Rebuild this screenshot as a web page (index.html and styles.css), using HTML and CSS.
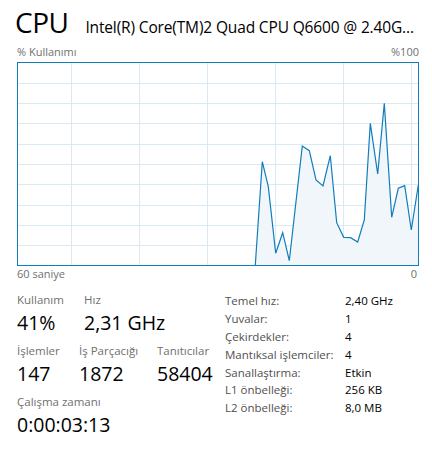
FILE: index.html
```
<!DOCTYPE html>
<html lang="tr">
<head>
<meta charset="utf-8">
<link rel="stylesheet" href="styles.css">
</head>
<body>
<div class="page">
  <header class="head">
    <h1 class="title">CPU</h1>
    <div class="model">Intel(R) Core(TM)2 Quad CPU Q6600 @ 2.40GHz</div>
  </header>
  <div class="axis axis-top"><span>% Kullanımı</span><span>%100</span></div>
  <svg class="graph" width="402" height="204" viewBox="0 0 402 204">
    <g class="grid">
      <line x1="54.5" y1="0" x2="54.5" y2="204"/>
      <line x1="122.5" y1="0" x2="122.5" y2="204"/>
      <line x1="190.5" y1="0" x2="190.5" y2="204"/>
      <line x1="258.5" y1="0" x2="258.5" y2="204"/>
      <line x1="326.5" y1="0" x2="326.5" y2="204"/>
      <line x1="394.5" y1="0" x2="394.5" y2="204"/>
      <line x1="0" y1="21.5" x2="402" y2="21.5"/>
      <line x1="0" y1="41.5" x2="402" y2="41.5"/>
      <line x1="0" y1="61.5" x2="402" y2="61.5"/>
      <line x1="0" y1="82.5" x2="402" y2="82.5"/>
      <line x1="0" y1="102.5" x2="402" y2="102.5"/>
      <line x1="0" y1="122.5" x2="402" y2="122.5"/>
      <line x1="0" y1="143.5" x2="402" y2="143.5"/>
      <line x1="0" y1="163.5" x2="402" y2="163.5"/>
      <line x1="0" y1="183.5" x2="402" y2="183.5"/>
    </g>
    <polygon class="area" points="238.3,203 245.3,99.7 251.3,124.7 258.7,191.3 265.7,170.7 272.3,198.7 285.3,84 292.3,88.7 299,118 306,124 313.3,93.7 319.7,160.7 326.7,175.3 333.7,175.7 340.7,180 347.3,158 353.3,61.3 360.7,112 367.3,41.3 374.7,155.3 381.3,126.3 387.7,123.7 394.3,168 401.3,123 401.3,203"/>
    <polyline class="line" points="238.3,203 245.3,99.7 251.3,124.7 258.7,191.3 265.7,170.7 272.3,198.7 285.3,84 292.3,88.7 299,118 306,124 313.3,93.7 319.7,160.7 326.7,175.3 333.7,175.7 340.7,180 347.3,158 353.3,61.3 360.7,112 367.3,41.3 374.7,155.3 381.3,126.3 387.7,123.7 394.3,168 401.3,123"/>
    <rect class="frame" x="0.5" y="0.5" width="401" height="203"/>
  </svg>
  <div class="axis axis-bottom"><span>60 saniye</span><span>0</span></div>

  <section class="details">
    <div class="stats">
      <div class="stat-row row-a">
        <div class="stat"><div class="label">Kullanım</div><div class="value">41%</div></div>
        <div class="stat"><div class="label">Hız</div><div class="value">2,31 GHz</div></div>
      </div>
      <div class="stat-row row-b">
        <div class="stat"><div class="label">İşlemler</div><div class="value">147</div></div>
        <div class="stat"><div class="label">İş Parçacığı</div><div class="value">1872</div></div>
        <div class="stat"><div class="label">Tanıtıcılar</div><div class="value">58404</div></div>
      </div>
      <div class="stat-row">
        <div class="stat"><div class="label">Çalışma zamanı</div><div class="value">0:00:03:13</div></div>
      </div>
    </div>
    <dl class="info">
      <dt>Temel hız:</dt><dd>2,40 GHz</dd>
      <dt>Yuvalar:</dt><dd>1</dd>
      <dt>Çekirdekler:</dt><dd>4</dd>
      <dt>Mantıksal işlemciler:</dt><dd>4</dd>
      <dt>Sanallaştırma:</dt><dd>Etkin</dd>
      <dt>L1 önbelleği:</dt><dd>256 KB</dd>
      <dt>L2 önbelleği:</dt><dd>8,0 MB</dd>
    </dl>
  </section>
</div>
</body>
</html>
```
FILE: styles.css
```
* { box-sizing: border-box; }
html, body { margin: 0; padding: 0; background: #fff; }
body {
  font-family: "Open Sans", "Noto Sans", "Liberation Sans", sans-serif;
  color: #000;
}
.page {
  width: 432px;
  padding: 6px 13px 0 17px;
}
.head {
  display: flex;
  align-items: baseline;
  gap: 17px;
  height: 38px;
}
.title {
  margin: 0 0 0 -2px;
  font-size: 28px;
  font-weight: 400;
  line-height: 32px;
  letter-spacing: -0.5px;
}
.model {
  flex: 1;
  min-width: 0;
  font-size: 15.5px;
  letter-spacing: -0.15px;
  white-space: nowrap;
  overflow: hidden;
  text-overflow: ellipsis;
}
.axis {
  display: flex;
  justify-content: space-between;
  font-size: 11px;
  color: #707070;
  line-height: 16px;
  width: 402px;
}
.axis-top { height: 18px; }
.axis-bottom { height: 26px; padding-right: 2px; }
.graph { display: block; }
.grid line { stroke: #d9eaf4; stroke-width: 1; }
.area { fill: #f1f6fa; stroke: none; }
.line { fill: none; stroke: #117dbb; stroke-width: 1.2; stroke-linejoin: miter; }
.frame { fill: none; stroke: #117dbb; stroke-width: 1; }

.details {
  display: flex;
}
.stats {
  width: 208px;
}
.stat-row {
  display: flex;
  margin-bottom: 8px;
}
.row-a .stat:first-child { width: 67px; }
.row-b .stat:nth-child(1) { width: 62px; }
.row-b .stat:nth-child(2) { width: 78px; }
.label {
  font-size: 11.5px;
  line-height: 16px;
  color: #707070;
  white-space: nowrap;
}
.value {
  font-size: 19.5px;
  line-height: 24px;
  margin-top: 3px;
  white-space: nowrap;
}
.info {
  margin: 0;
  display: grid;
  grid-template-columns: 120px auto;
  grid-auto-rows: 17.8px;
  font-size: 11.5px;
  align-items: center;
}
.info dt { color: #505050; margin: 0; white-space: nowrap; }
.info dd { margin: 0; color: #000; }
```
